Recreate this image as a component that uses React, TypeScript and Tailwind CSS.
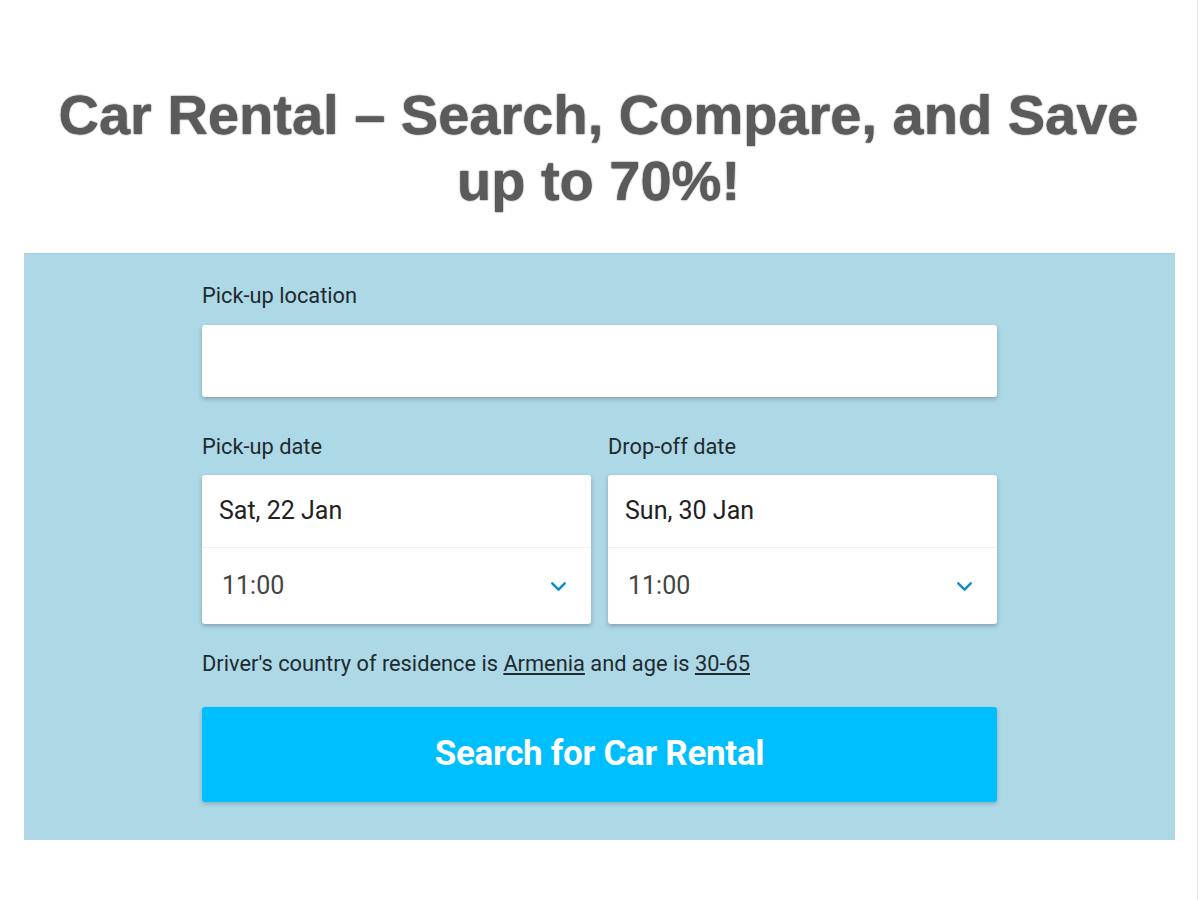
import { ChevronDown } from 'lucide-react'

function DateBox({ label, date }: { label: string; date: string }) {
  return (
    <div className="flex-1">
      <div className="text-[21.8px] text-[#1f2a30] leading-[24px] mb-[16px]">{label}</div>
      <div className="bg-white rounded-[3px] shadow-[0_2px_4px_rgba(0,0,0,0.25)] h-[149px] flex flex-col">
        <div className="h-[73px] flex items-center px-[17px] text-[25px] text-[#222] border-b border-[#f0f0f0]">
          {date}
        </div>
        <div className="flex-1 flex items-center justify-between pl-[20px] pr-[20px] text-[25px] text-[#444]">
          <span>11:00</span>
          <ChevronDown className="w-[25px] h-[25px] text-[#0a8cc2]" strokeWidth={2.3} />
        </div>
      </div>
    </div>
  )
}

export default function App() {
  return (
    <div className="min-h-[900px] bg-white font-['Roboto',sans-serif] border-r border-[#e6e6e6] w-[1198px]">
      <h1 className="pt-[82px] pb-[39px] text-center font-['Liberation_Sans',Arial,sans-serif] font-bold text-[56px] leading-[66px] text-[#5b5b5b] [text-shadow:0_0_1.5px_#111]">
        Car Rental – Search, Compare, and Save
        <br />
        up to 70%!
      </h1>

      <div className="mx-[24px] w-[1151px] bg-[#add8e6] pt-[30px] pb-[38px] border-t border-[#a3cfe0]">
        <div className="w-[795px] mx-auto">
          <div className="text-[21.8px] text-[#1f2a30] leading-[24px] mb-[17px]">Pick-up location</div>
          <div className="h-[72px] bg-white rounded-[3px] shadow-[0_2px_4px_rgba(0,0,0,0.25)]" />

          <div className="flex gap-[17px] mt-[38px]">
            <DateBox label="Pick-up date" date="Sat, 22 Jan" />
            <DateBox label="Drop-off date" date="Sun, 30 Jan" />
          </div>

          <p className="mt-[28px] text-[21.8px] leading-[24px] text-[#1f2a30]">
            Driver's country of residence is <span className="underline">Armenia</span> and age is{' '}
            <span className="underline">30-65</span>
          </p>

          <button className="mt-[31px] w-full h-[95px] bg-[#00bfff] rounded-[3px] shadow-[0_2px_4px_rgba(0,0,0,0.2)] text-white font-bold text-[35px] tracking-[-0.3px]">
            Search for Car Rental
          </button>
        </div>
      </div>
    </div>
  )
}
